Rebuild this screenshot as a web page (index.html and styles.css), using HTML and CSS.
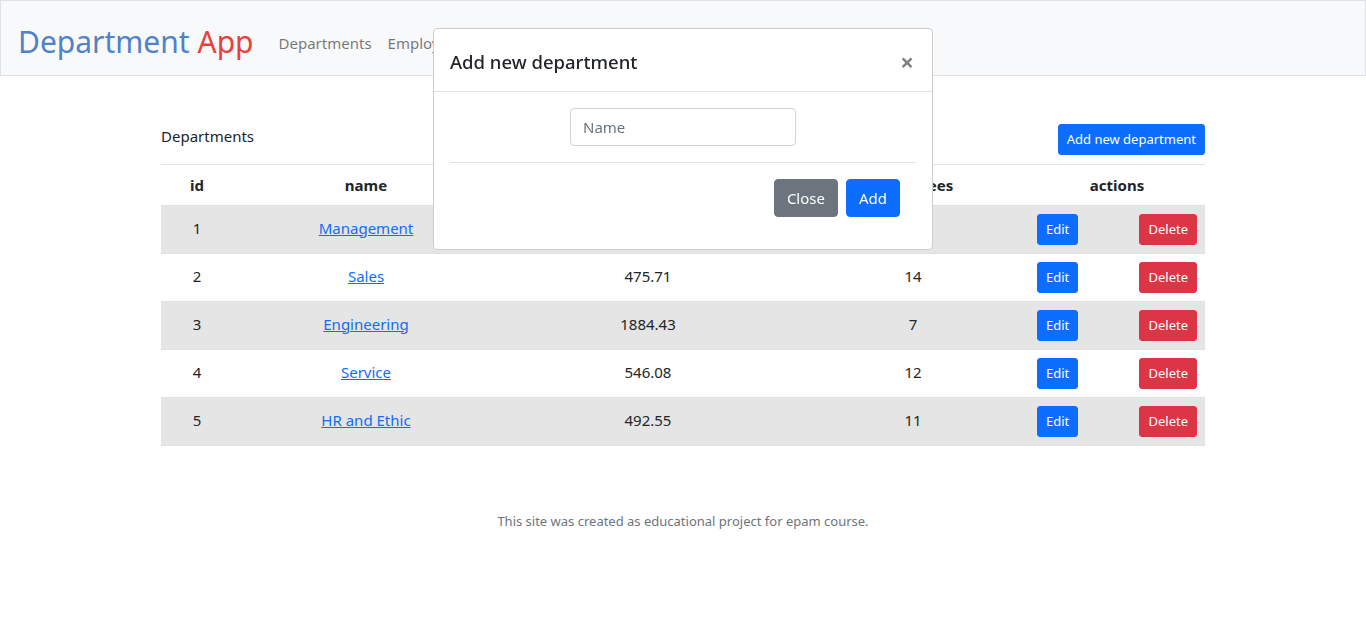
FILE: index.html
```html
<!DOCTYPE html>
<html lang="en">
<head>
<meta charset="utf-8">
<title>Department App</title>
<link rel="stylesheet" href="styles.css">
</head>
<body>
<nav class="navbar">
  <a class="brand" href="#"><span class="brand-main">Department</span> <span class="brand-app">App</span></a>
  <ul class="nav">
    <li><a class="nav-link" href="#">Departments</a></li>
    <li><a class="nav-link" href="#">Employees</a></li>
  </ul>
</nav>

<main class="container">
  <div class="title-row">
    <span class="title">Departments</span>
    <button class="btn btn-sm btn-primary">Add new department</button>
  </div>
  <table class="table">
    <colgroup>
      <col class="c-id"><col class="c-name"><col class="c-sal"><col class="c-emp"><col class="c-edit"><col class="c-del">
    </colgroup>
    <thead>
      <tr><th>id</th><th>name</th><th>average salary</th><th>employees</th><th colspan="2">actions</th></tr>
    </thead>
    <tbody>
      <tr class="odd"><td>1</td><td><a href="#">Management</a></td><td>2150.00</td><td>5</td><td class="edit"><button class="btn btn-sm btn-primary">Edit</button></td><td class="del"><button class="btn btn-sm btn-danger">Delete</button></td></tr>
      <tr><td>2</td><td><a href="#">Sales</a></td><td>475.71</td><td>14</td><td class="edit"><button class="btn btn-sm btn-primary">Edit</button></td><td class="del"><button class="btn btn-sm btn-danger">Delete</button></td></tr>
      <tr class="odd"><td>3</td><td><a href="#">Engineering</a></td><td>1884.43</td><td>7</td><td class="edit"><button class="btn btn-sm btn-primary">Edit</button></td><td class="del"><button class="btn btn-sm btn-danger">Delete</button></td></tr>
      <tr><td>4</td><td><a href="#">Service</a></td><td>546.08</td><td>12</td><td class="edit"><button class="btn btn-sm btn-primary">Edit</button></td><td class="del"><button class="btn btn-sm btn-danger">Delete</button></td></tr>
      <tr class="odd"><td>5</td><td><a href="#">HR and Ethic</a></td><td>492.55</td><td>11</td><td class="edit"><button class="btn btn-sm btn-primary">Edit</button></td><td class="del"><button class="btn btn-sm btn-danger">Delete</button></td></tr>
    </tbody>
  </table>
</main>

<footer class="footer">This site was created as educational project for epam course.</footer>

<div class="modal">
  <div class="modal-header">
    <h5 class="modal-title">Add new department</h5>
    <button class="close" aria-label="Close">&times;</button>
  </div>
  <div class="modal-body">
    <div class="field"><input class="form-control" type="text" placeholder="Name"></div>
    <hr class="sep">
    <div class="modal-actions">
      <button class="btn btn-secondary">Close</button>
      <button class="btn btn-primary">Add</button>
    </div>
  </div>
</div>
</body>
</html>
```

FILE: styles.css
```css
* { box-sizing: border-box; }
html, body { margin: 0; padding: 0; }
body {
  font-family: "Noto Sans", "DejaVu Sans", sans-serif;
  font-size: 15px;
  line-height: 24px;
  color: #212529;
  background: #fff;
}
.navbar {
  height: 76px;
  background: #f8f9fa;
  border: 1px solid #dee2e6;
  display: flex;
  align-items: center;
  padding: 8px 16px 0 17px;
}
.brand {
  font-size: 30px;
  line-height: 48px;
  text-decoration: none;
  margin-right: 17px;
}
.brand-main { color: #5181c6; }
.brand-app { color: #e8403b; }
.nav { list-style: none; margin: 0; padding: 0; display: flex; padding-top: 2px; }
.nav-link {
  display: block;
  padding: 8px;
  font-size: 15px;
  color: rgba(0,0,0,.55);
  text-decoration: none;
}
.container {
  width: 1044px;
  margin: 0 auto;
}
.title-row {
  display: flex;
  justify-content: space-between;
  align-items: flex-start;
  padding-top: 48px;
  margin-bottom: 9px;
}
.title { line-height: 24px; }
.btn {
  font-family: inherit;
  display: inline-block;
  border: 1px solid transparent;
  border-radius: 4px;
  color: #fff;
  font-size: 15px;
  line-height: 24px;
  padding: 6px 12px;
  cursor: pointer;
}
.btn-sm { font-size: 13px; line-height: 21px; padding: 4px 8px; border-radius: 3px; }
.btn-primary { background: #0d6efd; border-color: #0d6efd; }
.btn-secondary { background: #6c757d; border-color: #6c757d; }
.btn-danger { background: #dc3545; border-color: #dc3545; }
.table {
  width: 100%;
  border-collapse: collapse;
  table-layout: fixed;
  border-top: 1px solid #dee2e6;
}
.c-id { width: 72px; }
.c-name { width: 266px; }
.c-sal { width: 298px; }
.c-emp { width: 232px; }
.c-edit { width: 56px; }
.c-del { width: 120px; }
.table th, .table td {
  padding: 8px;
  text-align: center;
  border-bottom: 1px solid #dee2e6;
  vertical-align: middle;
}
.table td { padding: 6px 8px 10px; }
.table td.edit, .table td.del { padding: 8px; }
.table th { font-weight: 700; }
.table tr.odd td { background: #e5e5e5; }
.table td.del { text-align: right; }
.table a { color: #0d6efd; }
.footer {
  text-align: center;
  font-size: 13px;
  color: #6c757d;
  margin-top: 63px;
}
.modal {
  position: fixed;
  top: 28px;
  left: 433px;
  width: 500px;
  background: #fff;
  border: 1px solid rgba(0,0,0,.2);
  border-radius: 5px;
  z-index: 10;
}
.modal-header {
  display: flex;
  align-items: center;
  justify-content: space-between;
  padding: 18px 16px 14px;
  border-bottom: 1px solid #dee2e6;
}
.modal-title { margin: 0; font-size: 18.5px; font-weight: 500; line-height: 30px; }
.close {
  background: none;
  border: 0;
  padding: 0;
  margin-right: 2px;
  font-family: inherit;
  font-size: 24px;
  font-weight: 700;
  line-height: 1;
  color: #000;
  opacity: .5;
  cursor: pointer;
}
.modal-body { padding: 16px; }
.field { display: flex; justify-content: center; }
.form-control {
  width: 226px;
  height: 38px;
  border: 1px solid #ced4da;
  border-radius: 4px;
  padding: 6px 12px;
  font-family: inherit;
  font-size: 15px;
  color: #212529;
}
.form-control::placeholder { color: #6c757d; }
.sep { border: 0; border-top: 1px solid #dee2e6; margin: 16px 0; }
.modal-actions {
  display: flex;
  justify-content: flex-end;
  gap: 8px;
  padding: 0 16px 16px 0;
}
```
